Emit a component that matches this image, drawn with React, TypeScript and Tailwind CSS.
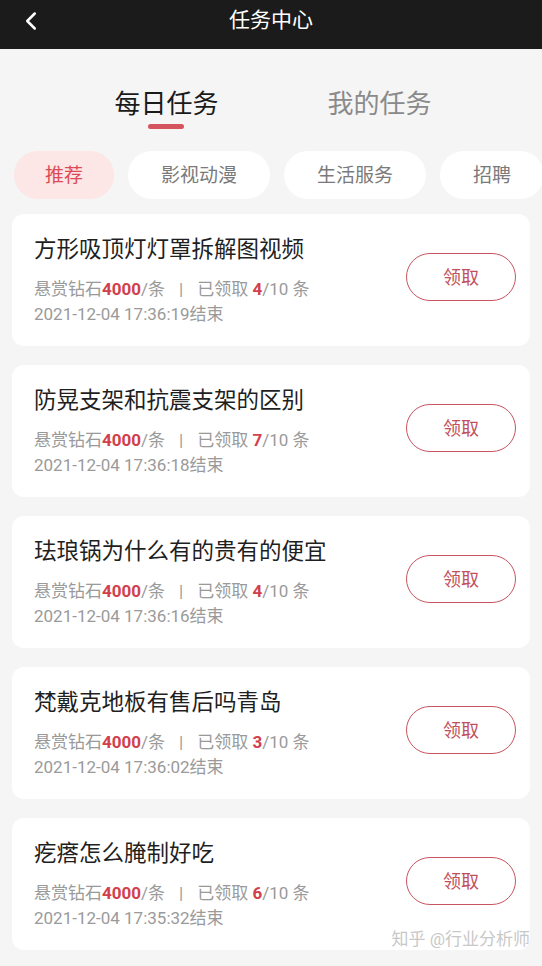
import { ChevronLeft } from 'lucide-react';

const tasks = [
	{ title: '方形吸顶灯灯罩拆解图视频', taken: 4, end: '2021-12-04 17:36:19' },
	{ title: '防晃支架和抗震支架的区别', taken: 7, end: '2021-12-04 17:36:18' },
	{ title: '珐琅锅为什么有的贵有的便宜', taken: 4, end: '2021-12-04 17:36:16' },
	{ title: '梵戴克地板有售后吗青岛', taken: 3, end: '2021-12-04 17:36:02' },
	{ title: '疙瘩怎么腌制好吃', taken: 6, end: '2021-12-04 17:35:32' },
];

const chips = ['推荐', '影视动漫', '生活服务', '招聘'];

export default function App() {
	return (
		<div
			className="relative h-[966px] w-[542px] overflow-hidden bg-[#f5f5f5]"
			style={{ fontFamily: 'Roboto, "Noto Sans CJK SC", sans-serif' }}
		>
			<header className="relative flex h-[49px] items-center justify-center bg-[#1b1b1b]">
				<ChevronLeft className="absolute left-[16px] top-[6px] h-[30px] w-[30px] text-white" strokeWidth={2} />
				<h1 className="-mt-[8px] text-[21px] leading-none text-white">任务中心</h1>
			</header>

			<div className="flex justify-center gap-[109px] pl-[4px] pt-[38px]">
				<div className="flex flex-col items-center">
					<span className="text-[26px] leading-[34px] text-[#1a1a1a]">每日任务</span>
					<span className="mt-[3px] h-[5px] w-[36px] rounded-full bg-[#d4555d]" />
				</div>
				<div className="flex flex-col items-center">
					<span className="text-[26px] leading-[34px] text-[#8a8a8a]">我的任务</span>
				</div>
			</div>

			<nav className="mt-[22px] flex gap-[14px] overflow-hidden pl-[14px]">
				{chips.map((c, i) => (
					<div
						key={c}
						className={
							i === 0
								? 'flex h-[48px] shrink-0 items-center rounded-full bg-[#fce6e6] px-[31px] pt-[3px] text-[19px] text-[#dc4a55]'
								: 'flex h-[48px] shrink-0 items-center rounded-full bg-white px-[33px] pt-[3px] text-[19px] text-[#7a7a7a]'
						}
					>
						{c}
					</div>
				))}
			</nav>

			<div className="mt-[15px] flex flex-col gap-[19px] px-[12px]">
				{tasks.map((t) => (
					<div
						key={t.title}
						className="flex h-[132px] items-center justify-between rounded-[12px] bg-white pl-[22px] pr-[14px]"
					>
						<div className="flex flex-col">
							<div className="text-[22.5px] leading-[30px] text-[#1f1f1f]">{t.title}</div>
							<div className="mt-[13px] text-[17px] leading-[25px] text-[#9a9a9a]">
								悬赏钻石<b className="font-bold text-[#d2404b]">4000</b>/条
								<span className="mx-[14px]">|</span>
								已领取 <b className="font-bold text-[#d2404b]">{t.taken}</b>/10 条
							</div>
							<div className="text-[17px] leading-[25px] text-[#9a9a9a]">{t.end}结束</div>
						</div>
						<button className="-mt-[6px] flex h-[48px] w-[110px] items-center justify-center rounded-full border-[1.5px] border-[#c85460] text-[18px] text-[#c2505b]">
							领取
						</button>
					</div>
				))}
			</div>

			<div className="absolute bottom-[14px] right-[12px] text-[17px] text-[#c8c8c8] [text-shadow:0_0_2px_#fff]">
				知乎 @行业分析师
			</div>
		</div>
	);
}
